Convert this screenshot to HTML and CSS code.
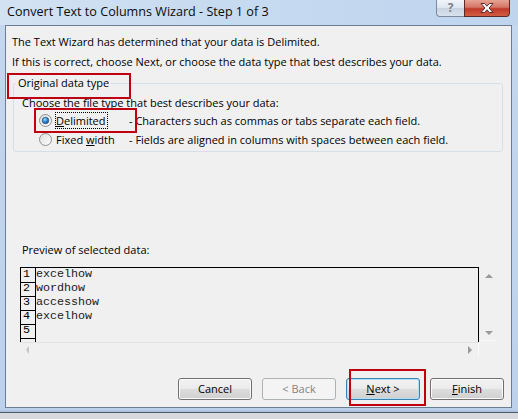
FILE: index.html
```html
<!DOCTYPE html>
<html>
<head>
<meta charset="utf-8">
<link rel="stylesheet" href="styles.css">
</head>
<body>
<div class="window">
  <div class="titlebar">
    <span class="title">Convert Text to Columns Wizard - Step 1 of 3</span>
    <div class="caption-btns">
      <div class="cap-help">?</div>
      <div class="cap-close">
        <svg width="16" height="12" viewBox="0 0 16 12"><path d="M2 1.5 L5.5 1.5 L8 4.2 L10.5 1.5 L14 1.5 L10 6 L14 10.5 L10.5 10.5 L8 7.8 L5.5 10.5 L2 10.5 L6 6 Z" fill="#fff" stroke="#5a2a2a" stroke-width="1" stroke-linejoin="round"/></svg>
      </div>
    </div>
  </div>
  <div class="frame">
    <div class="client">
      <p class="line">The Text Wizard has determined that your data is Delimited.</p>
      <p class="line">If this is correct, choose Next, or choose the data type that best describes your data.</p>
      <fieldset class="group">
        <legend>Original data type</legend>
        <div class="choose">Choose the file type that best describes your data:</div>
        <div class="opt">
          <span class="radio">
            <svg width="13" height="13" viewBox="0 0 13 13">
              <defs>
                <linearGradient id="rg" x1="0" y1="0" x2="1" y2="1"><stop offset="0" stop-color="#dcdcdc"/><stop offset="1" stop-color="#ffffff"/></linearGradient>
                <radialGradient id="dot" cx="0.4" cy="0.35" r="0.7"><stop offset="0" stop-color="#a6e0ff"/><stop offset="0.5" stop-color="#2a8ad4"/><stop offset="1" stop-color="#0c4f8c"/></radialGradient>
              </defs>
              <circle cx="6.5" cy="6.5" r="6" fill="url(#rg)" stroke="#8e8f8f"/>
              <circle cx="6.5" cy="6.5" r="3.3" fill="url(#dot)" stroke="#1c4a78" stroke-width="0.6"/>
            </svg>
          </span>
          <span class="lbl"><span class="focus"><u>D</u>elimited</span></span>
          <span class="desc">- Characters such as commas or tabs separate each field.</span>
        </div>
        <div class="opt">
          <span class="radio">
            <svg width="13" height="13" viewBox="0 0 13 13">
              <circle cx="6.5" cy="6.5" r="6" fill="url(#rg)" stroke="#8e8f8f"/>
            </svg>
          </span>
          <span class="lbl"><span class="nofocus">Fixed <u>w</u>idth</span></span>
          <span class="desc">- Fields are aligned in columns with spaces between each field.</span>
        </div>
      </fieldset>
      <div class="preview-label">Preview of selected data:</div>
      <div class="preview">
        <div class="preview-main">
          <div class="preview-box">
            <div class="row"><span class="num">1</span><span class="data">excelhow</span></div>
            <div class="row"><span class="num">2</span><span class="data">wordhow</span></div>
            <div class="row"><span class="num">3</span><span class="data">accesshow</span></div>
            <div class="row"><span class="num">4</span><span class="data">excelhow</span></div>
            <div class="row"><span class="num">5</span><span class="data"></span></div>
            <div class="row"><span class="num"></span><span class="data"></span></div>
          </div>
          <div class="hscroll">
            <span class="arr arr-left"></span>
            <span class="arr arr-right"></span>
          </div>
        </div>
        <div class="vscroll">
          <span class="arr arr-up"></span>
          <span class="arr arr-down"></span>
        </div>
      </div>
      <div class="buttons">
        <div class="btn">Cancel</div>
        <div class="btn disabled">&lt; Back</div>
        <div class="btn default"><u>N</u>ext &gt;</div>
        <div class="btn"><u>F</u>inish</div>
      </div>
    </div>
  </div>
  <div class="bottom-edge"></div>
  <div class="annot a-legend"></div>
  <div class="annot a-delim"></div>
  <div class="annot a-next"></div>
</div>
</body>
</html>
```

FILE: styles.css
```css
html, body {
  margin: 0;
  padding: 0;
  background: #d6d9de;
}
.window {
  position: relative;
  width: 518px;
  height: 419px;
  display: flex;
  flex-direction: column;
  font-family: "Open Sans", "Noto Sans", sans-serif;
  color: #000;
  overflow: hidden;
}
.titlebar {
  height: 25px;
  flex: none;
  display: flex;
  align-items: flex-start;
  justify-content: space-between;
  background: linear-gradient(to right, #d3e2f3 0%, #c7dbf0 40%, #bfd5ee 100%);
}
.title {
  font-size: 12.6px;
  line-height: 16px;
  padding: 4px 0 0 7px;
  color: #0b0b0b;
}
.caption-btns {
  display: flex;
  margin-right: 8px;
}
.cap-help {
  width: 27px;
  height: 16px;
  border: 1px solid #7d8a9b;
  border-top: none;
  border-right: none;
  border-radius: 0 0 0 4px;
  background: linear-gradient(#f0f4f9 0%, #dde6f0 50%, #c8d3e0 51%, #d7e2ee 100%);
  font-size: 12px;
  line-height: 15px;
  text-align: center;
  color: #7d8188;
  font-weight: bold;
}
.cap-close {
  width: 44px;
  height: 16px;
  border: 1px solid #5a2a2a;
  border-top: none;
  border-radius: 0 0 4px 0;
  background: linear-gradient(#e8a493 0%, #d47565 45%, #c0392b 55%, #d25e42 100%);
  display: flex;
  align-items: center;
  justify-content: center;
}
.cap-close svg { display: block; margin-top: -1px; }
.frame {
  flex: none;
  height: 384px;
  padding: 0 6px 0 5px;
  background: linear-gradient(#c3d7ee, #bcd2ec);
}
.client {
  height: 381px;
  border: 1px solid #6c7d93;
  background: #f0f0f0;
  display: flex;
  flex-direction: column;
  font-size: 11px;
}
.line {
  margin: 0;
  padding-left: 6px;
  line-height: 20px;
  height: 20px;
  white-space: nowrap;
}
.line:first-child { margin-top: 6px; }
.group {
  margin: 3px 8px 0 7px;
  padding: 0 2px 2px 2px;
  border: 1px solid #d5dfe5;
  border-radius: 3px;
  min-width: 0;
}
.group legend {
  padding: 0 2px;
  line-height: 16px;
  height: 16px;
  font-size: 11px;
}
.choose {
  margin-top: 4px;
  padding-left: 6px;
  line-height: 16px;
  height: 16px;
  white-space: nowrap;
}
.opt {
  display: grid;
  grid-template-columns: 16px 74px auto;
  align-items: center;
  height: 19px;
  padding-left: 23px;
  white-space: nowrap;
}
.radio { display: flex; width: 13px; height: 13px; }
.radio svg { display: block; }
.lbl { display: flex; align-items: center; }
.focus {
  display: block;
  border: 1px dotted #000;
  padding: 0 1px 0 0;
  line-height: 15px;
}
.nofocus {
  display: block;
  border: 1px solid transparent;
  line-height: 15px;
}
.preview-label {
  margin-top: 90px;
  padding-left: 16px;
  line-height: 16px;
  height: 16px;
}
.preview {
  margin: 9px 0 0 14px;
  height: 90px;
  display: flex;
}
.preview-main {
  width: 459px;
  display: flex;
  flex-direction: column;
}
.preview-box {
  height: 75px;
  border: 1px solid #000;
  border-bottom: none;
  overflow: hidden;
  font-family: "Liberation Mono", monospace;
  font-size: 11.7px;
}
.row {
  display: flex;
  height: 14px;
  line-height: 14px;
}
.num {
  width: 15px;
  flex: none;
  border-right: 1px solid #000;
  border-bottom: 1px solid #000;
  box-sizing: border-box;
  height: 15px;
  padding-left: 2px;
  line-height: 13px;
}
.data { padding-left: 0; line-height: 13px; color: #1a1a1a; }
.hscroll {
  height: 14px;
  border-top: 1px solid #e2e2e2;
  border-right: 1px solid #fafafa;
  display: flex;
  align-items: center;
  justify-content: space-between;
  padding: 0 6px;
}
.vscroll {
  width: 17px;
  height: 74px;
  display: flex;
  flex-direction: column;
  align-items: center;
  justify-content: space-between;
  padding-top: 7px;
  box-sizing: border-box;
  border-bottom: 1px solid #fbfbfb;
  margin-left: 1px;
  padding-bottom: 5px;
}
.arr { width: 0; height: 0; display: block; }
.arr-up { border-left: 4px solid transparent; border-right: 4px solid transparent; border-bottom: 4px solid #9a9a9a; }
.arr-down { border-left: 4px solid transparent; border-right: 4px solid transparent; border-top: 4px solid #9a9a9a; }
.arr-left { border-top: 4px solid transparent; border-bottom: 4px solid transparent; border-right: 3px solid #c4c4c4; }
.arr-right { border-top: 4px solid transparent; border-bottom: 4px solid transparent; border-left: 4px solid #9a9a9a; }
.buttons {
  margin-top: 21px;
  display: flex;
  justify-content: flex-end;
  gap: 10px;
  padding-right: 7px;
}
.btn {
  width: 74px;
  height: 22px;
  box-sizing: border-box;
  border: 1px solid #707070;
  border-radius: 3px;
  background: linear-gradient(#f2f2f2 0%, #ebebeb 50%, #dddddd 51%, #cfcfcf 100%);
  box-shadow: inset 0 0 0 1px #fbfbfb;
  text-align: center;
  line-height: 20px;
  font-size: 11px;
}
.btn.disabled {
  border-color: #adb2b5;
  background: #f4f4f4;
  box-shadow: none;
  color: #838383;
}
.btn.default {
  border-color: #3c7fb1;
  box-shadow: inset 0 0 0 1px #aee1f8;
}
.bottom-edge {
  flex: none;
  height: 4px;
  background: linear-gradient(#bcd2ec, #aabfd8 75%, #4c5a6a 75%);
  margin-top: 0;
}
.annot {
  position: absolute;
  border: 2px solid #c0000e;
  box-sizing: border-box;
}
.a-legend { left: 7px; top: 73px; width: 124px; height: 26px; }
.a-delim { left: 34px; top: 108px; width: 103px; height: 25px; }
.a-next { left: 349px; top: 369px; width: 77px; height: 37px; }
```
